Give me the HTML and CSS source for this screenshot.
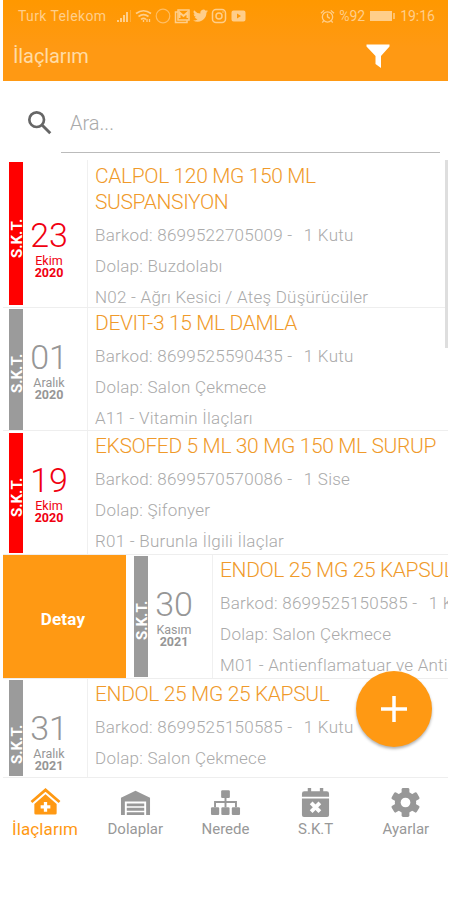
FILE: index.html
```html
<!DOCTYPE html>
<html lang="tr">

<head>
    <meta charset="UTF-8">
    <meta name="viewport" content="width=device-width, initial-scale=1.0">
    <title>İlaçlarım</title>
    <link rel="stylesheet" href="styles.css">
</head>

<body>
    <div class="app">
        <header class="header">
            <div class="status">
                <span class="carrier">Turk Telekom</span>
                <div class="status-icons">
                    <svg width="16" height="16" viewBox="0 0 16 16" fill="currentColor"><path d="M1 12h2v2H1zM4 10h2v4H4zM7 7h2v7H7zM10 4h2v10h-2z"/><path d="M14 2h1v12h-1z" opacity=".4"/></svg>
                    <svg width="17" height="16" viewBox="0 0 17 16" fill="none" stroke="currentColor" stroke-width="1.6"><path d="M1 5.500q7.500-5.500 15 0M3.500 8.500q5-3.700 10 0M6 11.300q2.500-1.800 5 0"/><path d="M8.500 14v-2M12 14v-3M14.500 14v-3" stroke-width="1.300"/></svg>
                    <svg width="16" height="16" viewBox="0 0 16 16" fill="none" stroke="currentColor" stroke-width="1.200" opacity=".7"><circle cx="8" cy="8" r="6.800"/></svg>
                    <svg width="16" height="16" viewBox="0 0 16 16" fill="none" stroke="currentColor" stroke-width="1.500"><path d="M4 2h11v10H4zM4 4H1.500v10.500H13V12"/><path d="M5.500 10V4.500l4 3.500 4-3.500V10" stroke-width="2"/></svg>
                    <svg width="15" height="16" viewBox="0 1 24 23" fill="currentColor"><path d="M24 4.600a10 10 0 0 1-2.800.8 5 5 0 0 0 2.200-2.700 10 10 0 0 1-3.100 1.200 4.900 4.900 0 0 0-8.400 4.500A14 14 0 0 1 1.700 3.100a4.900 4.900 0 0 0 1.500 6.600 5 5 0 0 1-2.200-.6 4.900 4.900 0 0 0 3.900 4.900 5 5 0 0 1-2.200.1 4.900 4.900 0 0 0 4.600 3.400A10 10 0 0 1 0 19.500 14 14 0 0 0 21.500 7.100 10 10 0 0 0 24 4.600z"/></svg>
                    <svg width="16" height="16" viewBox="0 0 16 16" fill="none" stroke="currentColor" stroke-width="1.500"><rect x="1.500" y="1.500" width="13" height="13" rx="3.500"/><circle cx="8" cy="8" r="3"/><path d="M11.500 4h1"/></svg>
                    <svg width="17" height="16" viewBox="0 0 16 16" fill="currentColor" fill-rule="evenodd"><path d="M3 2.500h10a2 2 0 0 1 2 2v7a2 2 0 0 1-2 2H3a2 2 0 0 1-2-2v-7a2 2 0 0 1 2-2zM6.500 5.500v5l4-2.500z"/></svg>
                </div>
                <div class="status-right">
                    <svg width="15" height="16" viewBox="0 0 16 16" fill="none" stroke="currentColor" stroke-width="1.400"><circle cx="8" cy="9" r="5.500"/><path d="M8 5.500V9l2.500 1.500M1 5l3.500-3M15 5l-3.500-3M4 13l-1.500 2M12 13l1.500 2"/></svg>
                    <span>%92</span>
                    <svg width="27" height="12" viewBox="0 0 27 12"><rect x="1" y="1" width="22" height="10" fill="currentColor"/><path d="M25 3v6" stroke="currentColor" stroke-width="1.500"/></svg>
                    <span>19:16</span>
                </div>
            </div>
            <div class="titlebar">
                <h1>İlaçlarım</h1>
                <svg width="24" height="24" viewBox="0 0 24 24" fill="#fff"><path d="M.5.500h23v2L15 12v12l-5.500-4v-8L.5 2.500z"/></svg>
            </div>
        </header>

        <div class="search">
            <svg width="32" height="32" viewBox="0 0 24 24" fill="none" stroke="#666" stroke-width="2"><circle cx="9.500" cy="9.500" r="5.500"/><path d="M13.700 13.700l6 6" stroke-width="2.200"/></svg>
            <div class="search-input">Ara...</div>
        </div>

        <main class="list">
            <div class="scrollbar"></div>
            <div class="row tall expired">
                <div class="bar"><span>S.K.T.</span></div>
                <div class="date"><span class="day">23</span><span class="month">Ekim</span><span class="year">2020</span></div>
                <div class="info">
                    <h2>CALPOL 120 MG 150 ML<br>SUSPANSIYON</h2>
                    <p>Barkod: 8699522705009 - <span class="amount">1 Kutu</span></p>
                    <p>Dolap: Buzdolabı</p>
                    <p>N02 - Ağrı Kesici / Ateş Düşürücüler</p>
                </div>
            </div>
            <div class="row">
                <div class="bar"><span>S.K.T.</span></div>
                <div class="date"><span class="day">01</span><span class="month">Aralık</span><span class="year">2020</span></div>
                <div class="info">
                    <h2>DEVIT-3 15 ML DAMLA</h2>
                    <p>Barkod: 8699525590435 - <span class="amount">1 Kutu</span></p>
                    <p>Dolap: Salon Çekmece</p>
                    <p>A11 - Vitamin İlaçları</p>
                </div>
            </div>
            <div class="row expired">
                <div class="bar"><span>S.K.T.</span></div>
                <div class="date"><span class="day">19</span><span class="month">Ekim</span><span class="year">2020</span></div>
                <div class="info">
                    <h2>EKSOFED 5 ML 30 MG 150 ML SURUP</h2>
                    <p>Barkod: 8699570570086 - <span class="amount">1 Sise</span></p>
                    <p>Dolap: Şifonyer</p>
                    <p>R01 - Burunla İlgili İlaçlar</p>
                </div>
            </div>
            <div class="row swiped">
                <div class="detail">Detay</div>
                <div class="bar"><span>S.K.T.</span></div>
                <div class="date"><span class="day">30</span><span class="month">Kasım</span><span class="year">2021</span></div>
                <div class="info">
                    <h2>ENDOL 25 MG 25 KAPSUL</h2>
                    <p>Barkod: 8699525150585 - <span class="amount">1 Kutu</span></p>
                    <p>Dolap: Salon Çekmece</p>
                    <p>M01 - Antienflamatuar ve Antiromatizmal</p>
                </div>
            </div>
            <div class="row last">
                <div class="bar"><span>S.K.T.</span></div>
                <div class="date"><span class="day">31</span><span class="month">Aralık</span><span class="year">2021</span></div>
                <div class="info">
                    <h2>ENDOL 25 MG 25 KAPSUL</h2>
                    <p>Barkod: 8699525150585 - <span class="amount">1 Kutu</span></p>
                    <p>Dolap: Salon Çekmece</p>
                </div>
            </div>
            <div class="add">
                <svg width="28" height="28" viewBox="0 0 28 28" stroke="#fff" stroke-width="3.500"><path d="M14 1v26M1 14h26"/></svg>
            </div>
        </main>

        <nav class="tabs">
            <div class="tab active">
                <svg width="31" height="31" viewBox="0 0 32 32" fill="currentColor"><path d="M1.500 16.500L16 4l14.500 12.500" fill="none" stroke="currentColor" stroke-width="2.800"/><path fill-rule="evenodd" d="M16 8.500l11.500 10V28a1.500 1.500 0 0 1-1.500 1.500H6A1.500 1.500 0 0 1 4.500 28v-9.500zM14.300 16.500v3.300H11v3.400h3.300v3.300h3.400v-3.300H21v-3.400h-3.300v-3.300z"/></svg>
                <span>İlaçlarım</span>
            </div>
            <div class="tab">
                <svg width="31" height="31" viewBox="0 0 32 32" fill="currentColor"><path d="M1 30V12l15-7 15 7v18h-4V16H5v14z"/><path d="M7 18h18v3H7zM7 22.500h18v3H7zM7 27h18v3H7z"/></svg>
                <span>Dolaplar</span>
            </div>
            <div class="tab">
                <svg width="31" height="31" viewBox="0 0 32 32" fill="currentColor"><rect x="11.500" y="4.500" width="9" height="8" rx="1.200"/><rect x="1" y="22" width="8.500" height="8" rx="1.200"/><rect x="11.700" y="22" width="8.500" height="8" rx="1.200"/><rect x="22.500" y="22" width="8.500" height="8" rx="1.200"/><path d="M16 12v10M5.200 22v-5.500h21.600V22" fill="none" stroke="currentColor" stroke-width="2"/></svg>
                <span>Nerede</span>
            </div>
            <div class="tab">
                <svg width="31" height="31" viewBox="0 0 32 32" fill="currentColor"><path d="M2 11V8a2.500 2.500 0 0 1 2.500-2.500H8V2h3.500v3.500h9V2H24v3.500h3.500A2.500 2.500 0 0 1 30 8v3z"/><path d="M2 13h28v17a2 2 0 0 1-2 2H4a2 2 0 0 1-2-2z"/><path d="M11.500 17.500l9 9M20.500 17.500l-9 9" stroke="#fff" stroke-width="4"/></svg>
                <span>S.K.T</span>
            </div>
            <div class="tab">
                <svg width="31" height="31" viewBox="0 0 32 32"><g fill="currentColor"><circle cx="16" cy="17" r="11"/><rect x="12" y="2" width="8" height="30" rx="1.500"/><rect x="12" y="2" width="8" height="30" rx="1.500" transform="rotate(60 16 17)"/><rect x="12" y="2" width="8" height="30" rx="1.500" transform="rotate(120 16 17)"/></g><circle cx="16" cy="17" r="5" fill="#fff"/></svg>
                <span>Ayarlar</span>
            </div>
        </nav>
    </div>
</body>

</html>
```

FILE: styles.css
```css
* {
    box-sizing: border-box;
}

body {
    margin: 0;
    background-color: #fff;
    font-family: Roboto, sans-serif;
    font-weight: 300;
    color: #aaa;
    overflow: hidden;
}

svg {
    display: block;
    flex: none;
}

h1,
h2,
p {
    margin: 0;
    font-weight: 300;
}

.app {
    width: 445px;
    margin-left: 3px;
}

.header {
    height: 81px;
    background-image: linear-gradient(#ff9800, #ff9913 60%);
    color: #ffdca5;
}

.status {
    display: flex;
    align-items: center;
    height: 32px;
    padding: 0 13px 0 15px;
    font-size: 14px;
    font-weight: 400;
    color: #ffce8a;
}

.carrier {
    width: 98px;
    letter-spacing: 0.4px;
}

.status-icons {
    display: flex;
    gap: 3px;
}

.status-right {
    display: flex;
    align-items: center;
    gap: 4px;
    margin-left: auto;
}

.titlebar {
    display: flex;
    align-items: center;
    justify-content: space-between;
    height: 47px;
    padding: 0 58px 0 10px;
}

h1 {
    font-size: 20px;
    font-weight: 400;
    letter-spacing: -0.1px;
}

.search {
    display: flex;
    height: 79px;
    padding: 26px 8px 0 21px;
}

.search-input {
    flex: 1;
    height: 46px;
    margin-left: 5px;
    padding-left: 9px;
    border-bottom: 1px solid #bbb;
    font-size: 20px;
    line-height: 32px;
}

.list {
    position: relative;
    height: 617px;
}

.scrollbar {
    position: absolute;
    z-index: 1;
    top: 0;
    right: 0;
    width: 3px;
    height: 188px;
    background-color: #dedede;
}

.row {
    display: flex;
    height: 123.7px;
    padding-left: 6px;
    border-bottom: 1px solid #eee;
    overflow: hidden;
}

.tall {
    height: 147.5px;
}

.last {
    height: 99px;
}

.bar {
    display: flex;
    flex: none;
    justify-content: center;
    width: 14px;
    height: 120.5px;
    margin-top: 1.5px;
    padding: 45px 0 0 2px;
    background-color: #9b9b9b;
    color: #fff;
    font-size: 15px;
    font-weight: 700;
    line-height: 14px;
}

.bar span {
    height: 39px;
    writing-mode: vertical-rl;
    transform: rotate(180deg);
}

.tall .bar {
    height: 143.5px;
    padding-top: 57px;
}

.last .bar {
    height: 96px;
}

.expired .bar {
    background-color: #f00;
}

.date {
    display: flex;
    flex: none;
    flex-direction: column;
    align-items: center;
    width: 65px;
    padding: 30px 12px 0 0;
    border-right: 1px solid #f0f0f0;
    color: #969696;
}

.tall .date {
    padding-top: 56px;
}

.expired .date {
    color: #f00010;
}

.day {
    font-size: 34px;
    line-height: 39px;
}

.month {
    font-size: 12.5px;
    font-weight: 400;
    line-height: 12px;
}

.year {
    font-size: 12.5px;
    font-weight: 700;
    line-height: 12px;
}

.info {
    flex: none;
    padding: 2px 0 0 7px;
    white-space: nowrap;
}

.tall .info {
    padding-top: 3px;
}

h2 {
    margin-bottom: 5px;
    color: #f09a2a;
    font-size: 21px;
    line-height: 26px;
    letter-spacing: -0.37px;
}

p {
    font-size: 17px;
    line-height: 31px;
    letter-spacing: 0.24px;
}

.amount {
    margin-left: 7px;
}

.swiped {
    padding-left: 0;
}

.detail {
    display: flex;
    flex: none;
    align-items: center;
    justify-content: center;
    width: 123px;
    margin-right: 8px;
    padding: 5px 3px 0 0;
    background-color: #ff9913;
    color: #fff;
    font-size: 17px;
    font-weight: 700;
    letter-spacing: 0.2px;
}

.add {
    position: absolute;
    right: 16px;
    top: 511px;
    display: flex;
    align-items: center;
    justify-content: center;
    width: 76px;
    height: 76px;
    border-radius: 50%;
    background-color: #ff9913;
    box-shadow: 0 2px 3px rgba(0, 0, 0, 0.3);
}

.tabs {
    display: grid;
    grid-template-columns: repeat(5, 1fr);
    margin: 0 -3px;
    padding-top: 9px;
    color: #989898;
    font-size: 15px;
    font-weight: 400;
}

.tab {
    display: flex;
    flex-direction: column;
    align-items: center;
    line-height: 24px;
}

.active {
    color: #ff9913;
    font-size: 17px;
    letter-spacing: 0.1px;
}
```
